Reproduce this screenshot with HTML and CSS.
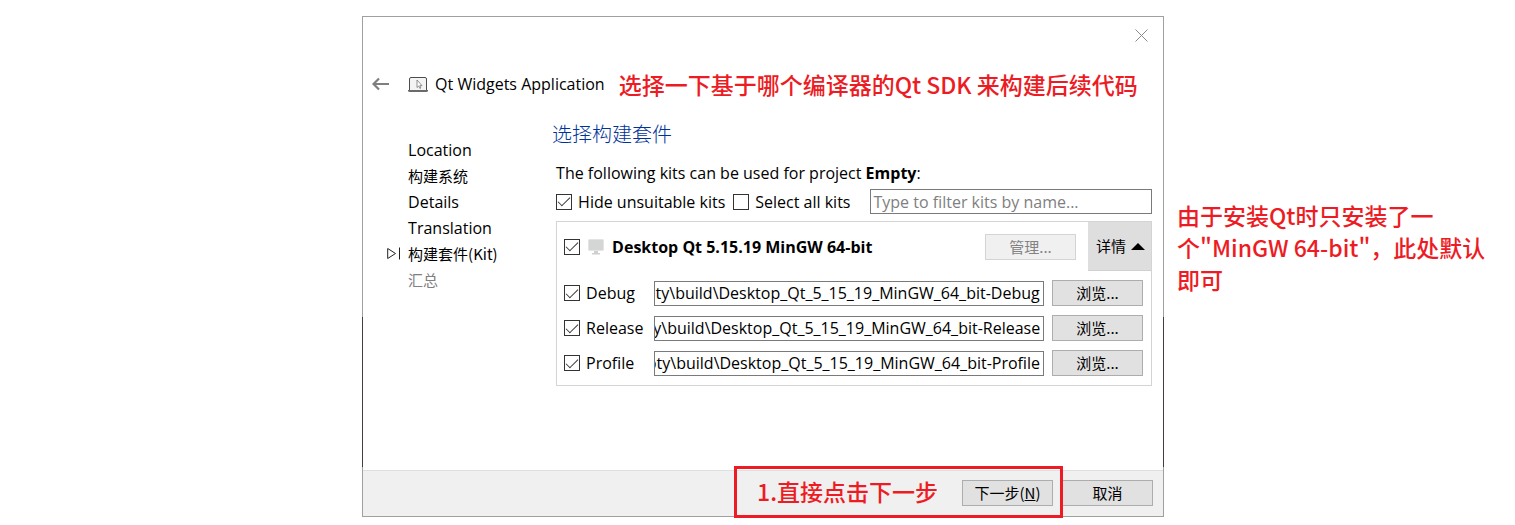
FILE: index.html
```html
<!DOCTYPE html>
<html lang="zh-CN">
<head>
<meta charset="utf-8">
<title>Qt Widgets Application</title>
<link rel="stylesheet" href="styles.css">
</head>
<body>
<main class="page">
  <section class="dialog" aria-labelledby="wizard-title">
    <div class="titlebar">
      <button class="icon-button" aria-label="Close">
        <svg width="13" height="13" viewBox="0 0 13 13"><path d="M.5 .5l12 12M12.5 .5l-12 12" stroke="#8a8a8a" fill="none"/></svg>
      </button>
    </div>
    <header class="header">
      <button class="icon-button back" aria-label="Back">
        <svg width="17" height="14" viewBox="0 0 17 14"><path d="M7 1.500L1.500 7L7 12.500M2 7h15" stroke="#7f7f7f" stroke-width="2.200" fill="none"/></svg>
      </button>
      <svg class="app-icon" width="20" height="15" viewBox="0 0 20 15"><path d="M1.500 13V2q0-1.500 1.500-1.500h14q1.500 0 1.500 1.500v11" fill="#f4f4f4" stroke="#4d4d4d"/><path d="M0 13h20v1q-.5 1-1.500 1h-17q-1 0-1.500-1z" fill="#6a6a6a"/><path d="M9 3v7.500l1.700-1.500 1.200 2.500 1-.5-1.100-2.400h2.200z" fill="#fff" stroke="#777" stroke-width=".8"/></svg>
      <h1 class="title" id="wizard-title">Qt Widgets Application</h1>
      <p class="note">选择一下基于哪个编译器的Qt SDK 来构建后续代码</p>
    </header>
    <div class="body">
      <ol class="steps">
        <li class="latin">Location</li>
        <li>构建系统</li>
        <li class="latin">Details</li>
        <li class="latin">Translation</li>
        <li class="current" aria-current="step"><svg class="marker" width="13" height="13" viewBox="0 0 13 13"><path d="M.7 1.500v10l7.800-5zM12.500 .5v12" fill="none" stroke="#222"/></svg>构建套件(Kit)</li>
        <li class="pending">汇总</li>
      </ol>
      <div class="content">
        <h2 class="heading">选择构建套件</h2>
        <p class="intro">The following kits can be used for project <strong>Empty</strong>:</p>
        <div class="filters">
          <label class="check"><input type="checkbox" checked>Hide unsuitable kits</label>
          <label class="check"><input type="checkbox">Select all kits</label>
          <input class="field filter" type="text" aria-label="Filter kits" placeholder="Type to filter kits by name...">
        </div>
        <div class="kit">
          <div class="kit-head">
            <label class="check kit-name"><input type="checkbox" checked>
              <svg width="16" height="16" viewBox="0 0 16 16"><rect x=".5" y=".5" width="15" height="11" rx="1" fill="#d4d6d6" stroke="#e4e4e4"/><path d="M6 12h4v2h2v1.500H4V14h2z" fill="#cfcfcf"/></svg>
              Desktop Qt 5.15.19 MinGW 64-bit</label>
            <button class="button" disabled>管理...</button>
            <button class="details" aria-expanded="true">详情<svg width="14" height="7" viewBox="0 0 14 7"><path d="M7 0l7 7H0z" fill="#000"/></svg></button>
          </div>
          <div class="builds">
            <label class="check"><input type="checkbox" checked>Debug</label>
            <input class="field path" type="text" aria-label="Debug path" value="Empty\build\Desktop_Qt_5_15_19_MinGW_64_bit-Debug">
            <button class="button">浏览...</button>
            <label class="check"><input type="checkbox" checked>Release</label>
            <input class="field path" type="text" aria-label="Release path" value="Empty\build\Desktop_Qt_5_15_19_MinGW_64_bit-Release">
            <button class="button">浏览...</button>
            <label class="check"><input type="checkbox" checked>Profile</label>
            <input class="field path" type="text" aria-label="Profile path" value="Empty\build\Desktop_Qt_5_15_19_MinGW_64_bit-Profile">
            <button class="button">浏览...</button>
          </div>
        </div>
      </div>
    </div>
    <footer class="footer">
      <div class="next-step">
        <p class="note">1.直接点击下一步</p>
        <button class="button">下一步(<u>N</u>)</button>
      </div>
      <button class="button">取消</button>
    </footer>
  </section>
  <aside class="note side-note">由于安装Qt时只安装了一个"MinGW 64-bit"，此处默认即可</aside>
</main>
<script src="paths.js"></script>
</body>
</html>
```
FILE: styles.css
```css
* { box-sizing: border-box; }

body, h1, h2, p, ol { margin: 0; padding: 0; font-weight: 400; }

body {
  background: #fff;
  color: #000;
  font: 16px/24px "Open Sans", "Noto Sans CJK SC", sans-serif;
}

button, input { margin: 0; font: inherit; color: inherit; }

svg { display: block; flex: none; }

.page {
  display: grid;
  grid-template-columns: minmax(0, 802fr) minmax(0, 338fr);
  column-gap: 13px;
  align-items: start;
  padding: 16px 0 8px 23.9%;
}

.dialog {
  display: flex;
  flex-direction: column;
  border: 1px solid #a0a0a0;
  border-image: linear-gradient(#a0a0a0 60%, #453f3c 60%, #453f3c 90%, #a0a0a0 90%) 1;
}

.titlebar {
  display: flex;
  justify-content: flex-end;
  padding: 12px 15px 0;
}

.icon-button { padding: 0; border: 0; background: none; }

.header {
  display: flex;
  align-items: center;
  height: 32px;
  margin-top: 26px;
  padding-left: 9px;
  white-space: nowrap;
}

.app-icon { margin-left: 19px; }
.title { margin-left: 7px; font-size: 16px; }
.header .note { margin-left: 14px; }

.note {
  color: #ed1c24;
  font: 500 23px/32px "Noto Sans CJK SC", sans-serif;
}

.side-note { padding: 183px 20px 0 0; }

.body {
  display: grid;
  grid-template-columns: 145px minmax(0, 1fr);
  column-gap: 44px;
  padding: 17px 11px 84px 4px;
}

.steps {
  padding: 20px 0 0 41px;
  list-style: none;
  font: 15px/26px "Noto Sans CJK SC", sans-serif;
  white-space: nowrap;
}

.steps .latin { font: 16px/26px "Open Sans", sans-serif; }
.steps .pending { color: #808080; }
.current { position: relative; }
.marker { position: absolute; left: -21px; top: 6px; }

.content { padding-top: 3px; }

.heading {
  margin-left: -4px;
  color: #003399;
  font: 300 20px/28px "Noto Sans CJK SC", sans-serif;
}

.intro { margin-top: 13px; }
.intro strong { font-weight: 700; }

.filters { display: flex; align-items: center; margin-top: 4px; }

.check { display: flex; align-items: center; gap: 6px; white-space: nowrap; }
.filters .check { margin-right: 8px; }

.check input {
  appearance: none;
  display: grid;
  place-items: center;
  flex: none;
  width: 16px;
  height: 16px;
  border: 1px solid #333;
  background: #fff;
}

.check input:checked::before {
  content: "";
  width: 11px;
  height: 5px;
  margin-bottom: 3px;
  border: solid #333;
  border-width: 0 0 1px 1px;
  transform: rotate(-45deg);
}

.field {
  min-width: 0;
  height: 25px;
  padding: 0 2px;
  border: 1px solid #7a7a7a;
  background: #fff;
}

.field::placeholder { color: #808080; }
.filter { flex: 1; margin-left: 12px; }
.path { width: 100%; padding: 0 3px 0 0; }

.kit { margin-top: 7px; border: 1px solid #d4d4d4; }

.kit-head { display: flex; align-items: center; padding-left: 7px; }
.kit-name { flex: 1; gap: 8px; font-weight: 700; }

.button {
  width: 91px;
  height: 26px;
  padding: 0;
  border: 1px solid #adadad;
  background: #e1e1e1;
  font: 15px/24px "Noto Sans CJK SC", sans-serif;
}

.button:disabled { border-color: #d4d4d4; background: #f0f0f0; color: #838383; }

.details {
  display: flex;
  align-items: center;
  justify-content: flex-end;
  gap: 5px;
  width: 63px;
  height: 49px;
  margin-left: 12px;
  padding: 0 6px;
  border: 0;
  border-bottom: 1px solid #d0d0d0;
  background: #dedede;
  font: 15px/24px "Noto Sans CJK SC", sans-serif;
}

.builds {
  display: grid;
  grid-template-columns: 82px minmax(0, 1fr) 91px;
  gap: 9px 8px;
  align-items: center;
  padding: 9px 8px 9px 7px;
}

.footer {
  display: flex;
  align-items: center;
  justify-content: flex-end;
  gap: 9px;
  height: 46px;
  padding: 0 10px 1px 0;
  border-top: 1px solid #dfdfdf;
  background: #f0f0f0;
}

.next-step {
  position: relative;
  display: flex;
  align-items: center;
  gap: 24px;
}

.next-step .note { padding-bottom: 4px; }

.next-step::before {
  content: "";
  position: absolute;
  inset: -9px -10px -7px -23px;
  border: 3px solid #ed1c24;
  pointer-events: none;
}
```
FILE: paths.js
```js
// Long build paths show their end, where the kit and build type differ.
document.querySelectorAll(".path").forEach(function (field) {
  field.scrollLeft = field.scrollWidth;
});
```
